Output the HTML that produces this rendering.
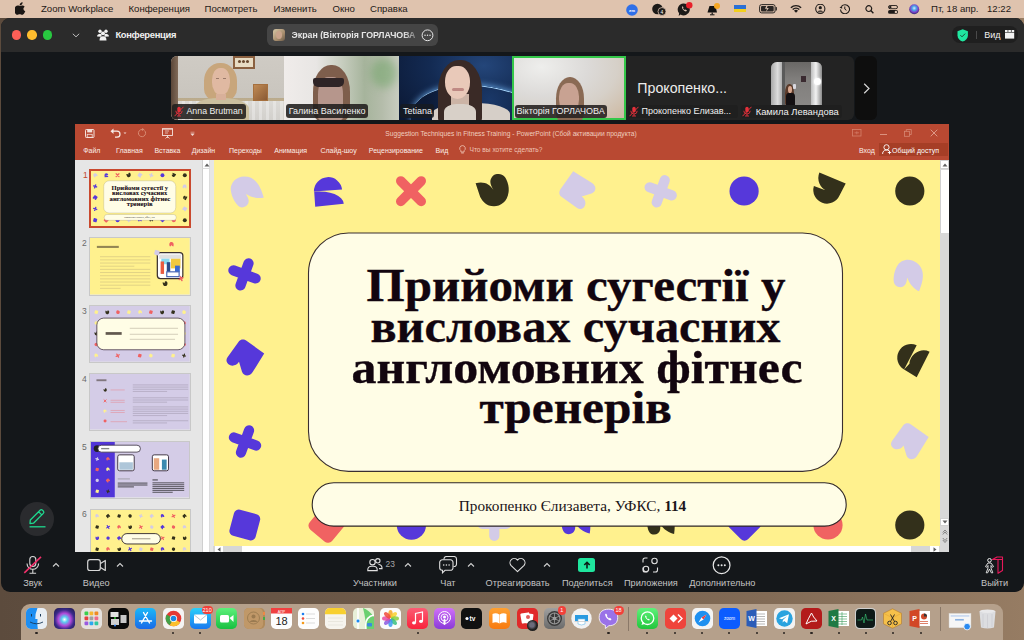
<!DOCTYPE html>
<html><head><meta charset="utf-8">
<style>
*{box-sizing:border-box;margin:0;padding:0}
html,body{width:1024px;height:640px;overflow:hidden;background:#8a7565;font-family:"Liberation Sans",sans-serif}
.a{position:absolute}
.t{position:absolute;white-space:nowrap;line-height:1}
#desk{left:0;top:0;width:1024px;height:640px;background:linear-gradient(90deg,#5c4b3d 0%,#6e5a49 40%,#826b56 75%,#967c63 100%)}
#menubar{left:0;top:0;width:1024px;height:17.5px;background:#dfc3ae}
.lbl{font-size:9px;color:#f0f0f0}
#menubar .t{font-size:9.6px;color:#1e1a18;top:4px}
#zw{left:1px;top:17.5px;width:1022.5px;height:574px;background:#14171a;border-radius:9px;overflow:hidden}
#zhead{left:0;top:0;width:100%;height:34.5px;background:#2b2b2b}
#ppt{left:75.3px;top:124.4px;width:873.5px;height:427.5px;background:#e6e6e6;overflow:hidden}
#ribbon{left:0;top:0;width:100%;height:35.5px;background:#b94932}
.tab{top:22.5px;font-size:7px;color:#fbeee8}
.num{font-size:8.5px;color:#6a6a6a}
#slide{left:139px;top:35.5px;width:726.5px;height:386.5px;background:#fff08e;overflow:hidden}
.tl{color:#c4c4c4;font-size:9.2px;top:579.2px}
#dock{left:21.1px;top:603.5px;width:981.6px;height:45px;background:#b5a08b;border-radius:9px}
</style></head>
<body>
<div id="desk" class="a"></div>
<div id="menubar" class="a">
  <div class="t" style="left:41px">Zoom Workplace</div>
  <div class="t" style="left:128.5px">Конференция</div>
  <div class="t" style="left:204.5px">Посмотреть</div>
  <div class="t" style="left:273.5px">Изменить</div>
  <div class="t" style="left:332.5px">Окно</div>
  <div class="t" style="left:370px">Справка</div>

  <svg class="a" style="left:15px;top:2px" width="11" height="13" viewBox="0 0 11 13"><path d="M7.6 0.3c0.1 0.9-0.3 1.8-0.8 2.3-0.6 0.6-1.4 1-2.2 0.9-0.1-0.9 0.3-1.7 0.8-2.3 0.6-0.6 1.5-1 2.2-0.9zM10.3 9.3c-0.3 0.7-0.5 1-0.9 1.6-0.6 0.9-1.4 1.9-2.4 1.9-0.9 0-1.1-0.6-2.3-0.6s-1.5 0.6-2.4 0.6c-1 0-1.7-0.9-2.3-1.8C-1.6 8.500-0.1 5.300 0.6 4.600 1.200 3.900 2 3.500 2.900 3.500c0.900 0 1.500 0.600 2.300 0.600 0.700 0 1.200-0.600 2.300-0.600 0.800 0 1.600 0.400 2.200 1.200-1.900 1.100-1.600 3.900 0.600 4.600z" fill="#1a1614"/></svg>
  <svg class="a" style="left:626px;top:3.5px" width="12" height="12"><circle cx="6" cy="6" r="5.8" fill="#2f6fe8"/><text x="6" y="7.6" font-size="4.2" font-family="Liberation Sans" font-weight="bold" fill="#fff" text-anchor="middle">zm</text></svg>
  <svg class="a" style="left:652px;top:3px" width="15" height="13"><circle cx="5.5" cy="6" r="5.3" fill="#1c1a18"/><circle cx="10" cy="8.5" r="4" fill="#1c1a18" stroke="#dcc3b1" stroke-width="0.8"/><text x="10" y="10.6" font-size="5" font-family="Liberation Sans" fill="#fff" text-anchor="middle">4</text></svg>
  <svg class="a" style="left:677px;top:1px" width="17" height="16"><path d="M6.5 2.5a6 6 0 1 1 -3 11l-1.8 1.5 0.4-2.7a6 6 0 0 1 4.4-9.8z" fill="#1c1a18"/><path d="M5 6.5c0.5 2 2 3.5 4 4l1-1-1.5-1-0.7 0.5c-0.8-0.4-1.4-1-1.8-1.8l0.5-0.7-1-1.5z" fill="#dcc3b1"/><circle cx="12.3" cy="4.3" r="3.2" fill="#e8202a"/></svg>
  <svg class="a" style="left:706px;top:2px" width="15" height="14"><path d="M1.5 10.5l2-6.5h6l1.5 6.5z" fill="#111"/><rect x="5.6" y="10.5" width="1.2" height="2" fill="#111"/><rect x="4" y="12.3" width="4.5" height="1" fill="#111"/><circle cx="11" cy="4" r="3" fill="#f5a623"/></svg>
  <div class="a" style="left:734px;top:4.7px;width:11.5px;height:3.9px;background:#2a6fd6"></div>
  <div class="a" style="left:734px;top:8.6px;width:11.5px;height:3.9px;background:#f2cf1e"></div>
  <svg class="a" style="left:759px;top:4px" width="19" height="10"><rect x="0.6" y="0.6" width="15.5" height="8.3" rx="2" fill="none" stroke="#2a2624" stroke-width="1"/><rect x="16.7" y="3" width="1.2" height="3.5" rx="0.5" fill="#2a2624"/><rect x="2" y="2" width="12.7" height="5.5" rx="1" fill="#2a2624"/><path d="M7.5 1.5l-1.5 3.2h2l-1 3.2 2.8-4h-2l1-2.4z" fill="#dcc3b1"/></svg>
  <svg class="a" style="left:790px;top:4px" width="12" height="9"><path d="M0.4 3.2a8 8 0 0 1 11.2 0l-1 1a6.5 6.5 0 0 0 -9.2 0z M2.2 5a5.4 5.4 0 0 1 7.6 0l-1 1a4 4 0 0 0 -5.6 0z M4 6.8a2.8 2.8 0 0 1 4 0l-2 2z" fill="#1f1b19"/></svg>
  <svg class="a" style="left:814.5px;top:4px" width="11" height="10"><circle cx="5.3" cy="4.8" r="4.6" fill="none" stroke="#1f1b19" stroke-width="1.1"/><circle cx="5.3" cy="3.7" r="1.6" fill="#1f1b19"/><path d="M2.4 7.7a3.4 2.6 0 0 1 5.8 0" fill="#1f1b19"/></svg>
  <svg class="a" style="left:839px;top:4px" width="11" height="10"><path d="M2.5 2.4a4.5 4.5 0 1 1 -1 3" fill="none" stroke="#1f1b19" stroke-width="1.1"/><path d="M0.5 3.5l2.5-1.5 0.2 2.8z" fill="#1f1b19"/><path d="M5.8 2.5v2.6l1.6 1.2" fill="none" stroke="#1f1b19" stroke-width="1"/></svg>
  <svg class="a" style="left:865px;top:4.5px" width="10" height="9"><circle cx="3.8" cy="3.6" r="2.9" fill="none" stroke="#1f1b19" stroke-width="1.2"/><path d="M5.8 5.6l2.6 2.6" stroke="#1f1b19" stroke-width="1.4"/></svg>
  <svg class="a" style="left:887.5px;top:4.5px" width="10" height="9"><rect x="0.5" y="0.5" width="9" height="3.2" rx="1.6" fill="none" stroke="#1f1b19" stroke-width="0.9"/><circle cx="2.3" cy="2.1" r="1.2" fill="#1f1b19"/><rect x="0" y="5" width="10" height="3.8" rx="1.9" fill="#1f1b19"/><circle cx="7.9" cy="6.9" r="1.2" fill="#dcc3b1"/></svg>
  <svg class="a" style="left:909px;top:3.5px" width="11" height="11"><defs><radialGradient id="sg" cx="50%" cy="40%" r="60%"><stop offset="0" stop-color="#e0e8ff"/><stop offset="0.35" stop-color="#4aa8e8"/><stop offset="0.7" stop-color="#7c3fc8"/><stop offset="1" stop-color="#2a2a6a"/></radialGradient></defs><circle cx="5.2" cy="5.2" r="5" fill="url(#sg)"/></svg>
  <div class="t" style="left:931px">Пт, 18 апр.</div>
  <div class="t" style="left:987px">12:22</div>
</div>
<div id="zw" class="a">

  <div id="zhead" class="a">
    <div class="a" style="left:10.9px;top:12.8px;width:9.4px;height:9.4px;border-radius:50%;background:#fe5f57"></div>
    <div class="a" style="left:26.4px;top:12.8px;width:9.4px;height:9.4px;border-radius:50%;background:#febc2e"></div>
    <div class="a" style="left:42.1px;top:12.8px;width:9.4px;height:9.4px;border-radius:50%;background:#28c840"></div>
    <svg class="a" style="left:71px;top:15.5px" width="8" height="5"><path d="M0.8 0.8l3.2 3 3.2-3" fill="none" stroke="#bdbdbd" stroke-width="1"/></svg>
    <svg class="a" style="left:95.5px;top:11.2px" width="12" height="12"><circle cx="3" cy="2.2" r="1.7" fill="#f2f2f2"/><circle cx="9" cy="2.2" r="1.7" fill="#f2f2f2"/><circle cx="6" cy="4.3" r="1.9" fill="#f2f2f2"/><path d="M0.2 7.5a2.8 2.2 0 0 1 4.5-2.2l-0.4 2.4z M11.8 7.5a2.8 2.2 0 0 0 -4.5-2.2l0.4 2.4z" fill="#f2f2f2"/><path d="M2.5 11.5a3.5 4.2 0 0 1 7 0z" fill="#f2f2f2"/></svg>
    <div class="t" style="left:114.4px;top:12.4px;font-size:9.4px;font-weight:bold;color:#f0f0f0;letter-spacing:-0.3px">Конференция</div>
    <div class="a" style="left:266.4px;top:6.1px;width:171px;height:22.2px;border-radius:6px;background:#454545"></div>
    <div class="a" style="left:271.6px;top:11.6px;width:12px;height:11.5px;border-radius:3px;background:linear-gradient(135deg,#d8c9a8,#a88e6e 60%,#6a5a48)"></div>
    <div class="a" style="left:274.5px;top:13px;width:6.5px;height:8px;border-radius:50%;background:#c9a48c"></div>
    <div class="t" style="left:290.5px;top:13.2px;font-size:8.8px;font-weight:bold;color:#e6e6e6;width:126px;overflow:hidden;-webkit-mask-image:linear-gradient(90deg,#000 88%,rgba(0,0,0,0.25))">Экран (Вікторія ГОРЛАЧОВА</div>
    <svg class="a" style="left:419.5px;top:11.3px" width="13" height="13"><circle cx="6.5" cy="6.3" r="5.4" fill="none" stroke="#e8e8e8" stroke-width="1"/><circle cx="4" cy="6.3" r="0.75" fill="#e8e8e8"/><circle cx="6.5" cy="6.3" r="0.75" fill="#e8e8e8"/><circle cx="9" cy="6.3" r="0.75" fill="#e8e8e8"/></svg>
    <div class="a" style="left:951.3px;top:8.7px;width:66px;height:16.4px;border-radius:8px;background:#1f1f1f"></div>
    <svg class="a" style="left:955.5px;top:11px" width="12" height="13"><path d="M5.7 0.3l5.2 2v4.2c0 3-2.3 5.1-5.2 6.1-2.9-1-5.2-3.1-5.2-6.1v-4.2z" fill="#1fe8a0"/><path d="M3.4 6.2l1.6 1.6 3.2-3.2" fill="none" stroke="#1a3a2c" stroke-width="0.9"/></svg>
    <div class="a" style="left:975.2px;top:13px;width:1px;height:8.5px;background:#4a4a4a"></div>
    <div class="t" style="left:983.3px;top:13.5px;font-size:9px;color:#f2f2f2">Вид</div>
    <svg class="a" style="left:1003.8px;top:12.8px" width="10" height="9"><rect x="0" y="2.6" width="9.2" height="6" fill="#f4f4f4"/><rect x="0" y="0" width="2.6" height="2" fill="#f4f4f4"/><rect x="3.3" y="0" width="2.6" height="2" fill="#f4f4f4"/><rect x="6.6" y="0" width="2.6" height="2" fill="#f4f4f4"/></svg>
  </div>
</div>
<div id="strip" class="a">
  <div class="a" style="left:171px;top:56.2px;width:682.5px;height:63.7px;border-radius:6px;background:#232323;overflow:hidden">
    <!-- tile1 -->
    <div class="a" style="left:0;top:0;width:113.4px;height:63.7px;background:linear-gradient(180deg,#cfcbc4 0%,#c9c5be 66%,#b9aa8c 66%,#c0ae8e 70%,#dcdad6 70%,#d2d0cc 100%)"></div>
    <div class="a" style="left:0;top:0;width:113.4px;height:63.7px;background:repeating-linear-gradient(90deg,rgba(255,255,255,0) 0 4px,rgba(255,255,255,.3) 4px 7px);-webkit-mask-image:linear-gradient(180deg,transparent 70%,#000 70%)"></div>
    <div class="a" style="left:0;top:0;width:6.5px;height:63.7px;background:linear-gradient(90deg,#5a4638,#806a58)"></div>
    <div class="a" style="left:62.2px;top:0;width:21.8px;height:12.4px;background:#e8dcc4;border:2px solid #8a6040"></div>
    <div class="a" style="left:67px;top:3.5px;width:3px;height:3px;border-radius:50%;background:#6a4a30;box-shadow:4px 0 #6a4a30,8px 0 #6a4a30"></div>
    <div class="a" style="left:81.8px;top:27.6px;width:14.8px;height:17.7px;background:linear-gradient(135deg,#c08a54,#8a5a34);border:1px solid #a6703e"></div>
    <div class="a" style="left:32.7px;top:7.3px;width:33.3px;height:37px;border-radius:48% 48% 30% 30%;background:#c8a67c"></div>
    <div class="a" style="left:22px;top:42px;width:56px;height:24px;border-radius:45% 45% 0 0;background:#cbbf9f"></div>
    <div class="a" style="left:41.2px;top:11.8px;width:17.6px;height:26.6px;border-radius:45% 45% 48% 48%;background:#e0b9a2"></div>
    <div class="a" style="left:45px;top:38px;width:10px;height:6px;background:#d8b09a"></div>
    <div class="a" style="left:44.5px;top:21.5px;width:3.5px;height:1.2px;background:#9a7a6a;box-shadow:7px 0 #9a7a6a"></div>
    <!-- tile2 -->
    <div class="a" style="left:113.4px;top:0;width:114.3px;height:63.7px;background:linear-gradient(90deg,#f0ecea 0%,#e8e6e4 28%,#c8cec0 50%,#a6b49c 70%,#b4bcaa 85%,#c8ccc0 100%)"></div>
    <div class="a" style="left:200px;top:2px;width:26px;height:30px;border-radius:50%;background:rgba(100,160,90,.45);filter:blur(4px)"></div>
    <div class="a" style="left:142px;top:8.5px;width:37px;height:56px;border-radius:48% 48% 20% 20%;background:#7e5e4c"></div>
    <div class="a" style="left:147px;top:20.8px;width:25px;height:43px;border-radius:40% 40% 10% 10%;background:#b6968c"></div>
    <div class="a" style="left:141.7px;top:22.3px;width:31.3px;height:8.1px;border-radius:2px 2px 5px 5px;background:#2e2426"></div>
    <!-- tile3 -->
    <div class="a" style="left:227.7px;top:0;width:113.4px;height:63.7px;overflow:hidden;background:radial-gradient(ellipse at 75% 15%,#24467a 0%,#132a52 45%,#0a1630 100%)">
      <div class="a" style="left:18px;top:31px;width:150px;height:80px;border-radius:50%;transform:rotate(10deg);transform-origin:50% 0;border-top:1.5px solid #a8d8ff;box-shadow:0 -1px 6px rgba(120,190,255,.75);background:radial-gradient(ellipse at 50% 15%,#1a3868,#0c1a36 60%)"></div>
      <div class="a" style="left:33px;top:46.8px;width:78px;height:24px;border-radius:45% 45% 0 0;background:#d6cfc8"></div>
      <div class="a" style="left:39px;top:4.1px;width:44px;height:64px;border-radius:48% 48% 10% 10%;background:#3a2a26"></div>
      <div class="a" style="left:52px;top:38px;width:18px;height:14px;background:#ccb4a6"></div>
      <div class="a" style="left:45.5px;top:48px;width:32px;height:20px;border-radius:40% 40% 0 0;background:#d8d0c8"></div>
      <div class="a" style="left:46.8px;top:9.8px;width:25px;height:33.5px;border-radius:45% 45% 50% 50%;background:#e9c9b9"></div>
      <div class="a" style="left:53px;top:31.5px;width:12px;height:3px;border-radius:2px;background:#c08a84"></div>
    </div>
    <!-- tile4 -->
    <div class="a" style="left:341.2px;top:0;width:113.8px;height:63.7px;border:2px solid #34c749;background:radial-gradient(ellipse at 25% 15%,#eeeeec 0%,#dcdad8 40%,#d6d0c8 65%,#cdb8a0 100%)"></div>
    <div class="a" style="left:384.7px;top:20.8px;width:28.6px;height:45px;border-radius:48% 48% 20% 20%;background:#8a6a54"></div>
    <div class="a" style="left:388px;top:26.8px;width:20px;height:30px;border-radius:45%;background:#c8a292"></div>
    <!-- tile6 inner video -->
    <div class="a" style="left:599.6px;top:6.1px;width:51.3px;height:42.4px;border-radius:6px 6px 0 0;overflow:hidden;background:linear-gradient(180deg,#6a6866,#807e7c 40%,#8a8886)">
      <div class="a" style="left:0;top:0;width:11px;height:43px;background:linear-gradient(90deg,#a8a8a8,#dcdcdc 60%,#b0b0b0)"></div>
      <div class="a" style="left:11px;top:0;width:3px;height:43px;background:#5a5a5a"></div>
      <div class="a" style="left:40px;top:0;width:11.3px;height:43px;background:linear-gradient(90deg,#bdbdbd,#f2f2f2 45%,#8a8a8a)"></div>
      <div class="a" style="left:43px;top:15.5px;width:7px;height:7px;border-radius:50%;background:#fff;box-shadow:0 0 3px #fff"></div>
      <div class="a" style="left:30px;top:14px;width:5px;height:6px;background:#3a2a30"></div>
      <div class="a" style="left:14.5px;top:22px;width:9px;height:21px;border-radius:45% 45% 10% 10%;background:#5a3a2a"></div>
      <div class="a" style="left:15px;top:31px;width:9px;height:12px;border-radius:30% 30% 0 0;background:#141012"></div>
      <div class="a" style="left:17px;top:24px;width:4.5px;height:7px;border-radius:45%;background:#d8a890"></div>
      <div class="a" style="left:22px;top:22px;width:3px;height:5px;border-radius:1px;background:#d8d8e0"></div>
    </div>
  </div>
  <div class="a" style="left:855.3px;top:56.4px;width:21.5px;height:63.3px;border-radius:6px;background:#0e0e0e"></div>
  <svg class="a" style="left:862.5px;top:82.5px" width="8" height="11"><path d="M1.2 0.8l4.8 4.7-4.8 4.7" fill="none" stroke="#d8d8d8" stroke-width="1.2"/></svg>
  <div class="t" style="left:637.3px;top:81.2px;font-size:14.2px;color:#ececec">Прокопенко...</div>
  <!-- labels -->
  <div class="a" style="left:172.2px;top:104.4px;width:73.8px;height:14.3px;border-radius:3px;background:rgba(32,30,28,.88)"></div>
  <div class="a" style="left:286.2px;top:104.4px;width:81.6px;height:14.1px;border-radius:3px;background:rgba(32,30,28,.88)"></div>
  <div class="a" style="left:400.2px;top:104.4px;width:33.9px;height:14.1px;border-radius:3px;background:rgba(22,26,34,.88)"></div>
  <div class="a" style="left:514.5px;top:105px;width:92.2px;height:13px;border-radius:3px;background:rgba(40,36,34,.9)"></div>
  <div class="a" style="left:627.7px;top:105px;width:110.3px;height:13.2px;border-radius:3px;background:#1f1f1f"></div>
  <div class="a" style="left:741.3px;top:104.7px;width:101.1px;height:13.3px;border-radius:3px;background:#1f1f1f"></div>
  <div class="t lbl" style="left:186.5px;top:106.8px;font-size:8.8px">Anna Brutman</div>
  <div class="t lbl" style="left:288.7px;top:106.8px">Галина Василенко</div>
  <div class="t lbl" style="left:403px;top:106.8px">Tetiana</div>
  <div class="t lbl" style="left:516.6px;top:106.8px">Вікторія ГОРЛАЧОВА</div>
  <div class="t lbl" style="left:641.5px;top:106.8px">Прокопенко Елизав...</div>
  <div class="t lbl" style="left:755.7px;top:106.8px;font-size:9.4px">Камила Левандова</div>
  <svg class="a mm" style="left:173.5px;top:106px" width="10" height="11"><rect x="3.3" y="0.8" width="3.4" height="5.6" rx="1.7" fill="#e5303a"/><path d="M1.8 4.8a3.2 3.2 0 0 0 6.4 0M5 8v2M3 10h4" fill="none" stroke="#e5303a" stroke-width="0.9"/><path d="M0.5 10.2l9-9.4" stroke="#e5303a" stroke-width="1"/></svg>
  <svg class="a mm" style="left:629px;top:106px" width="10" height="11"><rect x="3.3" y="0.8" width="3.4" height="5.6" rx="1.7" fill="#e5303a"/><path d="M1.8 4.8a3.2 3.2 0 0 0 6.4 0M5 8v2M3 10h4" fill="none" stroke="#e5303a" stroke-width="0.9"/><path d="M0.5 10.2l9-9.4" stroke="#e5303a" stroke-width="1"/></svg>
  <svg class="a mm" style="left:742px;top:106px" width="10" height="11"><rect x="3.3" y="0.8" width="3.4" height="5.6" rx="1.7" fill="#e5303a"/><path d="M1.8 4.8a3.2 3.2 0 0 0 6.4 0M5 8v2M3 10h4" fill="none" stroke="#e5303a" stroke-width="0.9"/><path d="M0.5 10.2l9-9.4" stroke="#e5303a" stroke-width="1"/></svg>
</div>
<div id="ppt" class="a">
  <div id="ribbon" class="a">
    <svg class="a" style="left:10px;top:4.5px" width="10" height="9"><rect x="0.5" y="0.5" width="8.5" height="8" rx="0.8" fill="none" stroke="#f4e2dc" stroke-width="1"/><rect x="2.2" y="0.8" width="5" height="2.6" fill="#f4e2dc"/><rect x="2.2" y="5.3" width="5" height="3" fill="none" stroke="#f4e2dc" stroke-width="0.8"/></svg>
    <svg class="a" style="left:34.5px;top:4px" width="18" height="10"><path d="M2 3.2h5a3 3 0 0 1 0 6h-2" fill="none" stroke="#f8ece8" stroke-width="1.2"/><path d="M0.5 3.2l3-2.7v5.4z" fill="#f8ece8"/><path d="M13.5 4.5h3l-1.5 1.6z" fill="#f0d8d0"/></svg>
    <svg class="a" style="left:62px;top:4px" width="10" height="10"><path d="M7.5 2.5a3.6 3.6 0 1 1 -2.5-1" fill="none" stroke="#d88a72" stroke-width="1"/><path d="M5 0l2.5 1.5-2.5 1.5z" fill="#d88a72"/></svg>
    <svg class="a" style="left:86.5px;top:4px" width="12" height="11"><rect x="0.5" y="1" width="10" height="6.5" fill="none" stroke="#f4e2dc" stroke-width="0.9"/><path d="M0 0.8h11" stroke="#f4e2dc"/><path d="M5.5 7.5v2.5M3.5 10.5l2-2 2 2" fill="none" stroke="#f4e2dc" stroke-width="0.8"/><path d="M3 3h4M3 5h3" stroke="#f4e2dc" stroke-width="0.7"/></svg>
    <svg class="a" style="left:115px;top:6.5px" width="5" height="6"><path d="M0.5 1.2h4M0.8 2.8l1.7 2 1.7-2z" fill="#f0d8d0" stroke="#f0d8d0" stroke-width="0.5"/></svg>
    <div class="t" style="left:310px;top:6.4px;font-size:6.7px;color:#f0cdbf">Suggestion Techniques in Fitness Training - PowerPoint (Сбой активации продукта)</div>
    <svg class="a" style="left:777px;top:4.5px;opacity:.6" width="10" height="8"><rect x="0.5" y="0.5" width="8.5" height="6.5" fill="none" stroke="#e9a590" stroke-width="0.8"/><path d="M2.5 3.8h4.5M4.8 2.3v3" stroke="#e9a590" stroke-width="0.7"/></svg>
    <div class="a" style="left:804.5px;top:10px;width:7px;height:0.9px;background:#eab2a0;opacity:.7"></div>
    <svg class="a" style="left:829px;top:5px;opacity:.6" width="8" height="8"><rect x="0.5" y="2.3" width="5" height="5" fill="none" stroke="#eab2a0" stroke-width="0.8"/><path d="M2.3 2.3v-1.8h5v5h-1.8" fill="none" stroke="#eab2a0" stroke-width="0.8"/></svg>
    <svg class="a" style="left:855px;top:5px;opacity:.75" width="8" height="8"><path d="M0.7 0.7l6.6 6.6M7.3 0.7l-6.6 6.6" stroke="#f0c0b0" stroke-width="0.9"/></svg>
    <div class="t tab" style="left:7.9px">Файл</div>
    <div class="t tab" style="left:40.8px">Главная</div>
    <div class="t tab" style="left:79.1px">Вставка</div>
    <div class="t tab" style="left:116.4px">Дизайн</div>
    <div class="t tab" style="left:153.7px">Переходы</div>
    <div class="t tab" style="left:199px">Анимация</div>
    <div class="t tab" style="left:245.1px">Слайд-шоу</div>
    <div class="t tab" style="left:293.5px">Рецензирование</div>
    <div class="t tab" style="left:360.3px">Вид</div>
    <svg class="a" style="left:383.5px;top:21px" width="7" height="9"><path d="M3.5 0.6a2.8 2.8 0 0 1 1.6 5.1v1.3h-3.2v-1.3a2.8 2.8 0 0 1 1.6-5.1z" fill="none" stroke="#f0c8b8" stroke-width="0.8"/><path d="M2.2 8h2.6" stroke="#f0c8b8" stroke-width="0.8"/></svg>
    <div class="t tab" style="left:394.2px;font-size:6.6px;color:#f0c4b4">Что вы хотите сделать?</div>
    <div class="t tab" style="left:783.7px">Вход</div>
    <div class="a" style="left:803.7px;top:18.6px;width:69.3px;height:13px;background:#a63e26"></div>
    <svg class="a" style="left:806.5px;top:19.5px" width="10" height="11"><circle cx="4.5" cy="3.3" r="2.6" fill="none" stroke="#fff" stroke-width="0.9"/><path d="M0.6 10a4 3.6 0 0 1 6.6-3.2M7.5 6.8v3.4M5.8 8.5h3.4" fill="none" stroke="#fff" stroke-width="0.9"/></svg>
    <div class="t tab" style="left:816.7px;color:#fff">Общий доступ</div>
  </div>
  <div class="a" style="left:0;top:35.5px;width:138px;height:392px;background:#e6e6e6"></div>
  <div class="a" style="left:127.2px;top:36px;width:8px;height:392px;background:#fff;border-left:1px solid #cfcfcf;border-right:1px solid #dcdcdc"></div>
  <div class="a" style="left:127.2px;top:36px;width:8px;height:9px;border-left:1px solid #cfcfcf;border-right:1px solid #dcdcdc;border-bottom:1px solid #dcdcdc;background:#fff"></div>
  <svg class="a" style="left:128.5px;top:39px" width="6" height="4"><path d="M0.5 3.5l2.5-3 2.5 3z" fill="#606060"/></svg>
  <div class="t num" style="left:7.7px;top:46.6px;color:#c0452c">1</div>
  <div class="t num" style="left:6.8px;top:114.6px">2</div>
  <div class="t num" style="left:6.8px;top:182.6px">3</div>
  <div class="t num" style="left:6.8px;top:250.6px">4</div>
  <div class="t num" style="left:6.8px;top:318.6px">5</div>
  <div class="t num" style="left:6.8px;top:385.3px">6</div>
  <div id="thumbs"><div class="a" style="left:13.8px;top:45.1px;width:102px;height:58.8px;border:2px solid #c9492e;overflow:hidden"><svg class="a" style="left:0;top:0" width="98" height="55.1" viewBox="0 0 727 409" preserveAspectRatio="none"><use href="#s1"/></svg></div>
<div class="a" style="left:14.2px;top:113.1px;width:101.7px;height:58.5px;border:1px solid #c8c8c8;overflow:hidden"><svg class="a" style="left:0;top:0" width="99.7" height="56.5" viewBox="0 0 727 409" preserveAspectRatio="none"><rect width="727" height="409" fill="#fff18e"/><rect x="50" y="57" width="160" height="15" fill="#4a3e2c" opacity="0.6"/><rect x="73" y="132.0" width="367" height="7" fill="#9a8c70" opacity="0.3"/><rect x="73" y="154.9" width="367" height="7" fill="#9a8c70" opacity="0.3"/><rect x="73" y="177.8" width="367" height="7" fill="#9a8c70" opacity="0.3"/><rect x="73" y="200.7" width="250" height="7" fill="#9a8c70" opacity="0.3"/><rect x="73" y="223.6" width="367" height="7" fill="#9a8c70" opacity="0.3"/><rect x="73" y="246.5" width="367" height="7" fill="#9a8c70" opacity="0.3"/><rect x="73" y="269.4" width="367" height="7" fill="#9a8c70" opacity="0.3"/><rect x="73" y="292.3" width="367" height="7" fill="#9a8c70" opacity="0.3"/><rect x="73" y="315.2" width="367" height="7" fill="#9a8c70" opacity="0.3"/><rect x="73" y="338.1" width="367" height="7" fill="#9a8c70" opacity="0.3"/><rect x="73" y="361.0" width="150" height="7" fill="#9a8c70" opacity="0.3"/><rect x="491" y="106" width="186" height="188" rx="22" fill="#fff" stroke="#3a3030" stroke-width="9"/><rect x="505" y="120" width="158" height="30" fill="#e0e0e0"/><rect x="590" y="150" width="70" height="70" fill="#f0c840"/><rect x="520" y="150" width="60" height="40" fill="#88d8f0"/><rect x="515" y="170" width="25" height="90" fill="#e85a40"/><rect x="560" y="175" width="25" height="70" fill="#2a4a8a"/><rect x="620" y="200" width="35" height="45" fill="#3a6ad0"/><rect x="560" y="245" width="90" height="35" fill="#fff" stroke="#3a5ab0" stroke-width="8"/><use href="#pac" transform="translate(595 48) rotate(30) scale(1.1)" fill="#f06262"/><use href="#rsq" transform="translate(488 106) rotate(15) scale(1.3)" fill="#d3cbe7"/><use href="#xx" transform="translate(664 294) rotate(20) scale(1.1)" style="color:#f06262;fill:none"/><use href="#tul" transform="translate(547 330) rotate(0) scale(1.1)" fill="#33301b"/></svg></div>
<div class="a" style="left:14.2px;top:181.1px;width:101.7px;height:57.6px;border:1px solid #c8c8c8;overflow:hidden"><svg class="a" style="left:0;top:0" width="99.7" height="55.6" viewBox="0 0 727 409" preserveAspectRatio="none"><rect width="727" height="409" fill="#d4cce7"/><use href="#rsq" transform="translate(46 45.5) rotate(15) scale(0.9)" fill="#fff18e"/><use href="#tul" transform="translate(125 45.5) rotate(15) scale(0.9)" fill="#33301b"/><use href="#circ" transform="translate(204 45.5) rotate(15) scale(0.9)" fill="#f06262"/><use href="#rsq" transform="translate(284 45.5) rotate(15) scale(0.9)" fill="#fff18e"/><use href="#pac" transform="translate(366 45.5) rotate(15) scale(0.9)" fill="#fff18e"/><use href="#rsq" transform="translate(444 45.5) rotate(15) scale(0.9)" fill="#f06262"/><use href="#tul" transform="translate(525 45.5) rotate(15) scale(0.9)" fill="#33301b"/><use href="#rsq" transform="translate(606 45.5) rotate(15) scale(0.9)" fill="#33301b"/><use href="#circ" transform="translate(686 45.5) rotate(15) scale(0.9)" fill="#fff18e"/><use href="#pac" transform="translate(46 365) rotate(15) scale(0.9)" fill="#fff18e"/><use href="#xx" transform="translate(202 365) rotate(15) scale(0.9)" style="color:#f06262;fill:none"/><use href="#rsq" transform="translate(363 365) rotate(15) scale(0.9)" fill="#f06262"/><use href="#circ" transform="translate(444 365) rotate(15) scale(0.9)" fill="#fff18e"/><use href="#rsq" transform="translate(606 365) rotate(15) scale(0.9)" fill="#fff18e"/><use href="#plus" transform="translate(686 365) rotate(15) scale(0.9)" style="color:#33301b;fill:none"/><use href="#circ" transform="translate(46 125) rotate(0) scale(0.9)" fill="#fff18e"/><use href="#tul" transform="translate(46 202) rotate(0) scale(0.9)" fill="#33301b"/><use href="#circ" transform="translate(46 283) rotate(0) scale(0.9)" fill="#f06262"/><use href="#circ" transform="translate(686 125) rotate(0) scale(0.9)" fill="#f06262"/><use href="#circ" transform="translate(686 202) rotate(0) scale(0.9)" fill="#fff18e"/><use href="#circ" transform="translate(686 283) rotate(0) scale(0.9)" fill="#f06262"/><rect x="50" y="89" width="642" height="233" rx="50" fill="#fffde6" stroke="#4a3a4a" stroke-width="6"/><rect x="114" y="192" width="117" height="20" fill="#3a2e28" opacity="0.8"/><rect x="290" y="160" width="352" height="9" fill="#8a8070" opacity="0.3"/><rect x="290" y="204" width="352" height="9" fill="#8a8070" opacity="0.3"/><rect x="290" y="241" width="330" height="9" fill="#8a8070" opacity="0.3"/></svg></div>
<div class="a" style="left:14.2px;top:249.1px;width:101.7px;height:57.5px;border:1px solid #c8c8c8;overflow:hidden"><svg class="a" style="left:0;top:0" width="99.7" height="55.5" viewBox="0 0 727 409" preserveAspectRatio="none"><rect width="727" height="409" fill="#d4cce7"/><rect x="47" y="39" width="73" height="14" fill="#4a3e3a" opacity="0.6"/><use href="#tul" transform="translate(110 118) rotate(0) scale(0.75)" fill="#33301b"/><use href="#xx" transform="translate(110 198) rotate(0) scale(0.75)" style="color:#f06262;fill:none"/><use href="#pac" transform="translate(110 274) rotate(0) scale(0.75)" fill="#fff18e"/><use href="#circ" transform="translate(110 346) rotate(0) scale(0.75)" fill="#f06262"/><rect x="150" y="114" width="103" height="7" fill="#f06262" opacity="0.35"/><rect x="150" y="190" width="103" height="7" fill="#f06262" opacity="0.35"/><rect x="150" y="205" width="103" height="7" fill="#f06262" opacity="0.35"/><rect x="150" y="265" width="103" height="7" fill="#f06262" opacity="0.35"/><rect x="150" y="280" width="103" height="7" fill="#f06262" opacity="0.35"/><rect x="150" y="348" width="120" height="7" fill="#f06262" opacity="0.35"/><rect x="312" y="77" width="404" height="7" fill="#6a6070" opacity="0.28"/><rect x="312" y="93" width="404" height="7" fill="#6a6070" opacity="0.28"/><rect x="312" y="109" width="404" height="7" fill="#6a6070" opacity="0.28"/><rect x="312" y="125" width="250" height="7" fill="#6a6070" opacity="0.28"/><rect x="312" y="172" width="404" height="7" fill="#6a6070" opacity="0.28"/><rect x="312" y="188" width="404" height="7" fill="#6a6070" opacity="0.28"/><rect x="312" y="204" width="250" height="7" fill="#6a6070" opacity="0.28"/><rect x="312" y="239" width="404" height="7" fill="#6a6070" opacity="0.28"/><rect x="312" y="255" width="404" height="7" fill="#6a6070" opacity="0.28"/><rect x="312" y="271" width="404" height="7" fill="#6a6070" opacity="0.28"/><rect x="312" y="287" width="404" height="7" fill="#6a6070" opacity="0.28"/><rect x="312" y="303" width="250" height="7" fill="#6a6070" opacity="0.28"/><rect x="312" y="341" width="404" height="7" fill="#6a6070" opacity="0.28"/><rect x="312" y="357" width="250" height="7" fill="#6a6070" opacity="0.28"/></svg></div>
<div class="a" style="left:14.5px;top:316.9px;width:100.2px;height:57.3px;border:1px solid #c8c8c8;overflow:hidden"><svg class="a" style="left:0;top:0" width="98.2" height="55.3" viewBox="0 0 727 409" preserveAspectRatio="none"><rect width="727" height="409" fill="#d4cce7"/><rect width="176" height="409" fill="#5135d8"/><use href="#plus" transform="translate(46 126) rotate(15) scale(0.85)" style="color:#d3cbe7;fill:none"/><use href="#pac" transform="translate(126 126) rotate(15) scale(0.85)" fill="#f06262"/><use href="#rsq" transform="translate(46 203) rotate(15) scale(0.85)" fill="#f06262"/><use href="#pac" transform="translate(126 203) rotate(15) scale(0.85)" fill="#fff18e"/><use href="#circ" transform="translate(46 284) rotate(15) scale(0.85)" fill="#d3cbe7"/><use href="#bm" transform="translate(126 284) rotate(15) scale(0.85)" fill="#f06262"/><use href="#rsq" transform="translate(46 365) rotate(15) scale(0.85)" fill="#fff18e"/><use href="#plus" transform="translate(126 365) rotate(15) scale(0.85)" style="color:#33301b;fill:none"/><circle cx="45" cy="49" r="25" fill="#222"/><rect x="51" y="23.5" width="315" height="51.5" rx="25.7" fill="#fff" stroke="#3a3040" stroke-width="6"/><rect x="75" y="44" width="60" height="10" fill="#333" opacity="0.6"/><rect x="198" y="95" width="122" height="118" rx="14" fill="#fff" stroke="#3a3040" stroke-width="7"/><rect x="210" y="150" width="100" height="55" fill="#9ab8d0" opacity="0.8"/><rect x="454" y="95" width="120" height="118" rx="14" fill="#fff" stroke="#3a3040" stroke-width="7"/><rect x="465" y="120" width="40" height="85" fill="#e8a880"/><rect x="525" y="130" width="35" height="75" fill="#3a8ab0"/><rect x="198" y="269" width="90" height="8" fill="#888" opacity="0.6"/><rect x="198" y="300" width="220" height="8" fill="#222" opacity="0.7"/><rect x="198" y="314" width="220" height="8" fill="#222" opacity="0.7"/><rect x="198" y="328" width="120" height="8" fill="#222" opacity="0.7"/><rect x="455" y="276" width="40" height="9" fill="#222" opacity="0.7"/><rect x="455" y="298" width="235" height="8" fill="#222" opacity="0.65"/><rect x="455" y="312" width="235" height="8" fill="#222" opacity="0.65"/><rect x="455" y="326" width="235" height="8" fill="#222" opacity="0.65"/><rect x="455" y="340" width="235" height="8" fill="#222" opacity="0.65"/><rect x="455" y="354" width="235" height="8" fill="#222" opacity="0.65"/><rect x="455" y="368" width="150" height="8" fill="#222" opacity="0.65"/></svg></div>
<div class="a" style="left:14.3px;top:384.3px;width:101.3px;height:45px;border:1px solid #c8c8c8;overflow:hidden"><svg class="a" style="left:0;top:0" width="99.3" height="55.8" viewBox="0 0 727 409" preserveAspectRatio="none"><rect width="727" height="409" fill="#fff18e"/><use href="#pac" transform="translate(45 44) rotate(15) scale(0.85)" fill="#d3cbe7"/><use href="#bm" transform="translate(125 44) rotate(15) scale(0.85)" fill="#33301b"/><use href="#rsq" transform="translate(206 44) rotate(15) scale(0.85)" fill="#33301b"/><use href="#circ" transform="translate(286 44) rotate(15) scale(0.85)" fill="#33301b"/><use href="#plus" transform="translate(365 44) rotate(15) scale(0.85)" style="color:#d3cbe7;fill:none"/><use href="#bm" transform="translate(445 44) rotate(15) scale(0.85)" fill="#d3cbe7"/><use href="#pac" transform="translate(524 44) rotate(15) scale(0.85)" fill="#5638da"/><use href="#xx" transform="translate(604 44) rotate(15) scale(0.85)" style="color:#f06262;fill:none"/><use href="#bm" transform="translate(685 44) rotate(15) scale(0.85)" fill="#33301b"/><use href="#rsq" transform="translate(45 125) rotate(15) scale(0.85)" fill="#33301b"/><use href="#xx" transform="translate(125 125) rotate(15) scale(0.85)" style="color:#5638da;fill:none"/><use href="#pac" transform="translate(206 125) rotate(15) scale(0.85)" fill="#f06262"/><use href="#tul" transform="translate(286 125) rotate(15) scale(0.85)" fill="#33301b"/><use href="#xx" transform="translate(365 125) rotate(15) scale(0.85)" style="color:#f06262;fill:none"/><use href="#circ" transform="translate(445 125) rotate(15) scale(0.85)" fill="#d3cbe7"/><use href="#bm" transform="translate(524 125) rotate(15) scale(0.85)" fill="#5638da"/><use href="#circ" transform="translate(604 125) rotate(15) scale(0.85)" fill="#f06262"/><use href="#pac" transform="translate(685 125) rotate(15) scale(0.85)" fill="#d3cbe7"/><use href="#tul" transform="translate(45 206) rotate(15) scale(0.85)" fill="#5638da"/><use href="#circ" transform="translate(125 206) rotate(15) scale(0.85)" fill="#5638da"/><use href="#bm" transform="translate(206 206) rotate(15) scale(0.85)" fill="#5638da"/><use href="#xx" transform="translate(524 206) rotate(15) scale(0.85)" style="color:#f06262;fill:none"/><use href="#rsq" transform="translate(604 206) rotate(15) scale(0.85)" fill="#33301b"/><use href="#tul" transform="translate(685 206) rotate(15) scale(0.85)" fill="#33301b"/><use href="#rsq" transform="translate(45 287) rotate(15) scale(0.85)" fill="#33301b"/><use href="#pac" transform="translate(125 287) rotate(15) scale(0.85)" fill="#f06262"/><use href="#tul" transform="translate(206 287) rotate(15) scale(0.85)" fill="#33301b"/><use href="#xx" transform="translate(286 287) rotate(15) scale(0.85)" style="color:#5638da;fill:none"/><use href="#rsq" transform="translate(365 287) rotate(15) scale(0.85)" fill="#d3cbe7"/><use href="#rsq" transform="translate(445 287) rotate(15) scale(0.85)" fill="#f06262"/><use href="#pac" transform="translate(524 287) rotate(15) scale(0.85)" fill="#5638da"/><use href="#circ" transform="translate(604 287) rotate(15) scale(0.85)" fill="#33301b"/><use href="#pac" transform="translate(685 287) rotate(15) scale(0.85)" fill="#d3cbe7"/><rect x="225" y="173" width="283" height="76" rx="38" fill="#fffde6" stroke="#3a3030" stroke-width="7"/><rect x="300" y="206" width="135" height="9" fill="#6a6050" opacity="0.5"/></svg></div></div>
  <svg id="slidesvg" class="a" style="left:139px;top:35.5px" width="726.5" height="386.5" viewBox="0 0 726.5 386.5">
<defs>
<path id="circ" d="M-14.6 0a14.6 14.6 0 1 0 29.2 0a14.6 14.6 0 1 0 -29.2 0z"/>
<path id="pac" d="M16.8 5.1C14 -4 10 -15.9 -2.75 -15.9C-12 -15.9 -17 -8 -16.2 -2.2C-15.5 5 -10 14.9 -5.2 14.9C-0.5 14.9 2.5 11 1.5 7C0.8 4 -0.9 2.5 -0.9 1.5C4 5 12 6.5 16.8 5.1Z"/>
<path id="dd" d="M-14.8 -0.6L13.4 -2.4A14.15 14.15 0 0 0 -14.8 -0.6ZM-14.5 -0.3A28.7 15.1 -6 0 1 15.1 11.8L-13.5 14.8Z"/>
<path id="dd2" d="M-10.1 -16.4L16.2 -5.6A14.2 14.2 0 0 1 -10.1 -16.4ZM-15.6 -3L10 6.6A13.7 13.7 0 0 1 -15.6 -3ZM16.2 -5.6L10 6.6L-2.3 2.3Z"/>
<path id="dd3" d="M4 -15L-8.6 9.3A13.7 13.7 0 0 1 4 -15ZM16.9 -8.6L4 16.9A14.3 14.3 0 0 1 16.9 -8.6ZM-8.6 9.3L0 0L4 16.9Z"/>
<g id="xx"><path d="M-10.2 -10.2L10.2 10.2M10.2 -10.2L-10.2 10.2" stroke-width="9.6" stroke-linecap="round" stroke="currentColor"/></g>
<path id="tul" d="M-16.8 -6.9C-8 -9 -3 -6 1 -0.3C-2 -5 -3 -9 -1 -12C1 -16 4 -16.2 6.3 -16.2C11 -16.2 14 -12 15 -8C16.5 -4 16.5 0 16.2 2C15 12 8 16.2 1.6 16.2C-6 16.2 -10 11 -12.2 6.9Z"/>
<path id="bm" d="M-4.4 -18.7L14.5 -7C19 -4 19 1.5 14 3.5L4 6.5C8 9 9 14 6.5 17C4.5 19.5 1.5 19.5 -0.5 18L-16.5 6.5C-19 4.5 -18.5 1 -17 -1Z"/>
<g id="plus"><path d="M0 -11.8V11.8M-11.8 0H11.8" stroke-width="10.2" stroke-linecap="round" stroke="currentColor"/></g>
<rect id="rsq" x="-13.5" y="-13.5" width="27" height="27" rx="5"/>
</defs>
<g id="s1">
<rect x="0" y="0" width="727" height="409" fill="#fff18e"/>
<use href="#pac" transform="translate(33 32.5) rotate(0) scale(1)" fill="#d3cbe7"/>
<use href="#dd" transform="translate(114.7 32) rotate(0) scale(1)" fill="#5638da"/>
<use href="#xx" transform="translate(197 31.2) rotate(0) scale(1)" style="color:#f06262;fill:none"/>
<use href="#tul" transform="translate(278.4 30.1) rotate(0) scale(1)" fill="#33301b"/>
<use href="#bm" transform="translate(363.6 30) rotate(0) scale(1)" fill="#d3cbe7"/>
<use href="#plus" transform="translate(446.7 31.3) rotate(20) scale(1)" style="color:#d3cbe7;fill:none"/>
<use href="#circ" transform="translate(530.1 31) rotate(0) scale(1)" fill="#5638da"/>
<use href="#dd2" transform="translate(615.5 29) rotate(0) scale(1)" fill="#33301b"/>
<use href="#circ" transform="translate(695.8 31) rotate(0) scale(1)" fill="#33301b"/>
<use href="#pac" transform="translate(695 117) rotate(38) scale(1)" fill="#d3cbe7"/>
<use href="#dd3" transform="translate(698.7 200.3) rotate(0) scale(1)" fill="#33301b"/>
<use href="#bm" transform="translate(696 281.5) rotate(90) scale(1)" fill="#d3cbe7"/>
<use href="#circ" transform="translate(695.8 365) rotate(0) scale(1)" fill="#33301b"/>
<use href="#plus" transform="translate(30.5 114.4) rotate(20) scale(1)" style="color:#5638da;fill:none"/>
<use href="#bm" transform="translate(31.5 197.8) rotate(90) scale(1)" fill="#5638da"/>
<use href="#plus" transform="translate(31 281.5) rotate(20) scale(1)" style="color:#5638da;fill:none"/>
<use href="#rsq" transform="translate(30.8 365) rotate(15) scale(1)" fill="#5638da"/>
<use href="#rsq" transform="translate(112.8 364.5) rotate(40) scale(1.08)" fill="#f06262"/>
<use href="#circ" transform="translate(197.4 365.20000000000005) rotate(0) scale(1)" fill="#5638da"/>
<use href="#plus" transform="translate(280.3 364) rotate(0) scale(1)" style="color:#d3cbe7;fill:none"/>
<use href="#pac" transform="translate(362.5 362) rotate(24) scale(1)" fill="#5638da"/>
<use href="#pac" transform="translate(447.5 363) rotate(24) scale(0.95)" fill="#33301b"/>
<use href="#rsq" transform="translate(530.5 364) rotate(45) scale(0.98)" fill="#5638da"/>
<use href="#circ" transform="translate(614 365) rotate(0) scale(1)" fill="#f06262"/>

<rect x="94.5" y="73" width="534" height="238.4" rx="40" fill="#fffde6" stroke="#3a2f30" stroke-width="1.1"/>
<rect x="98.2" y="322.8" width="534" height="43.3" rx="21.6" fill="#fffde6" stroke="#2e2628" stroke-width="1.1"/>
<g font-family="Liberation Serif" font-weight="bold" fill="#12050f" font-size="46.5" stroke="#12050f" stroke-width="0.35">
<text x="152.5" y="140.6" textLength="419" lengthAdjust="spacingAndGlyphs">Прийоми сугестії у</text>
<text x="156.5" y="181.9" textLength="410" lengthAdjust="spacingAndGlyphs">висловах сучасних</text>
<text x="137.6" y="222.6" textLength="451" lengthAdjust="spacingAndGlyphs">англомовних фітнес</text>
<text x="265.5" y="263.2" textLength="192.3" lengthAdjust="spacingAndGlyphs">тренерів</text>
</g>
<text x="358.5" y="350.5" font-family="Liberation Serif" font-size="15.3" fill="#1a1418" text-anchor="middle">Прокопенко Єлизавета, УФКС, <tspan font-weight="bold">114</tspan></text>
</g>
</svg>
  <div class="a" style="left:864.5px;top:35.5px;width:9.3px;height:392px;background:#d8d8d8"></div>
  <div class="a" style="left:864.5px;top:36px;width:9px;height:9px;background:#fff;border:1px solid #d0d0d0"></div>
  <svg class="a" style="left:866.5px;top:38.5px" width="6" height="4"><path d="M0.5 3.5l2.5-3 2.5 3z" fill="#606060"/></svg>
  <div class="a" style="left:864.7px;top:45.5px;width:8.6px;height:63px;background:#fff;border-left:1px solid #d0d0d0"></div>
  <div class="a" style="left:864.5px;top:393.8px;width:9px;height:7.5px;background:#fff;border:1px solid #d0d0d0"></div>
  <svg class="a" style="left:866.5px;top:396px" width="6" height="4"><path d="M0.5 0.5l2.5 3 2.5-3z" fill="#606060"/></svg>
  <svg class="a" style="left:866.5px;top:404.5px" width="6" height="14"><path d="M0.8 3.5l2.2-2.5 2.2 2.5M0.8 5.5l2.2-2.5 2.2 2.5M0.8 9l2.2 2.5 2.2-2.5M0.8 11l2.2 2.5 2.2-2.5" fill="none" stroke="#606060" stroke-width="0.7"/></svg>
  <div class="a" style="left:138px;top:421.8px;width:726.5px;height:6px;background:#d6d6d6"></div>
  <div class="a" style="left:139.3px;top:421.8px;width:8.4px;height:6px;background:#fff"></div>
  <svg class="a" style="left:141.5px;top:422.8px" width="4" height="5"><path d="M3.5 0.3l-3 2.2 3 2.2z" fill="#606060"/></svg>
  <div class="a" style="left:167.2px;top:421.8px;width:668.8px;height:6px;background:#fff"></div>
  <div class="a" style="left:854.7px;top:421.8px;width:9.4px;height:6px;background:#fff"></div>
  <svg class="a" style="left:858px;top:422.8px" width="4" height="5"><path d="M0.5 0.3l3 2.2-3 2.2z" fill="#606060"/></svg>
</div>
<div id="toolbar">
  <div class="a" style="left:19.8px;top:501.8px;width:34.4px;height:34.2px;border-radius:50%;background:#2a2b2e"></div>
  <svg class="a" style="left:27px;top:508px" width="20" height="21"><path d="M3 15.5l0.3-3.5 9.8-9.8a1.7 1.7 0 0 1 2.4 0l0.8 0.8a1.7 1.7 0 0 1 0 2.4l-9.8 9.8z M11.6 3.7l3.2 3.2" fill="none" stroke="#1ed88e" stroke-width="1.3" stroke-linejoin="round"/><path d="M2.5 18.8h16" stroke="#1ed88e" stroke-width="1.3"/></svg>
  <svg class="a" style="left:23px;top:554.5px" width="20" height="20"><rect x="6.8" y="1.5" width="6" height="10" rx="3" fill="none" stroke="#d8d8d8" stroke-width="1.1"/><path d="M4 8.5a5.8 5.8 0 0 0 11.6 0M9.8 14.3v3.8M6.5 18.3h6.6" fill="none" stroke="#d8d8d8" stroke-width="1.1"/><path d="M1.3 17.8L18 1.8" stroke="#f0306a" stroke-width="1.6"/></svg>
  <svg class="a st" style="left:52px;top:561.5px" width="8" height="6"><path d="M1 4.5l3-3 3 3" fill="none" stroke="#d0d0d0" stroke-width="1.1"/></svg>
  <svg class="a" style="left:86.5px;top:558.5px" width="20" height="13"><rect x="0.7" y="0.7" width="12.6" height="10.8" rx="2.3" fill="none" stroke="#d8d8d8" stroke-width="1.2"/><path d="M13.5 4.5l4.8-3v10l-4.8-3" fill="none" stroke="#d8d8d8" stroke-width="1.2" stroke-linejoin="round"/></svg>
  <svg class="a" style="left:115.5px;top:561.5px" width="8" height="6"><path d="M1 4.5l3-3 3 3" fill="none" stroke="#d0d0d0" stroke-width="1.1"/></svg>
  <svg class="a" style="left:367px;top:558px" width="16" height="14"><circle cx="5.5" cy="4.2" r="2.7" fill="none" stroke="#e0e0e0" stroke-width="1.1"/><path d="M0.8 12.6v-0.8a3.6 3.6 0 0 1 3.6-3.6h2.2a3.6 3.6 0 0 1 3.6 3.6v0.8z" fill="none" stroke="#e0e0e0" stroke-width="1.1"/><circle cx="10.8" cy="2.8" r="2.2" fill="none" stroke="#e0e0e0" stroke-width="1.1"/><path d="M11.5 6.5a3.3 3.3 0 0 1 3.5 3.3v0.8h-3" fill="none" stroke="#e0e0e0" stroke-width="1.1"/></svg>
  <div class="t" style="left:385.5px;top:560.3px;font-size:8.4px;color:#a8a8a8">23</div>
  <svg class="a" style="left:403.5px;top:561.5px" width="8" height="6"><path d="M1 4.5l3-3 3 3" fill="none" stroke="#d0d0d0" stroke-width="1.1"/></svg>
  <svg class="a" style="left:438.5px;top:556px" width="19" height="18"><path d="M5 3.5v-0.5a2.5 2.5 0 0 1 2.5-2.5h7.5a2.5 2.5 0 0 1 2.5 2.5v5a2.5 2.5 0 0 1 -2.5 2.5h-0.5" fill="none" stroke="#e0e0e0" stroke-width="1.1"/><path d="M3.2 3.8h8.3a2.5 2.5 0 0 1 2.5 2.5v5.5a2.5 2.5 0 0 1 -2.5 2.5h-5.5l-2.5 2.5v-2.5h-0.3a2.5 2.5 0 0 1 -2.5-2.5v-5.5a2.5 2.5 0 0 1 2.5-2.5z" fill="#15181c" stroke="#e0e0e0" stroke-width="1.1"/><circle cx="4.7" cy="9" r="0.8" fill="#e0e0e0"/><circle cx="7.4" cy="9" r="0.8" fill="#e0e0e0"/><circle cx="10.1" cy="9" r="0.8" fill="#e0e0e0"/></svg>
  <svg class="a" style="left:467px;top:561.5px" width="8" height="6"><path d="M1 4.5l3-3 3 3" fill="none" stroke="#d0d0d0" stroke-width="1.1"/></svg>
  <svg class="a" style="left:508px;top:557px" width="19" height="16"><path d="M9.5 14.6l-6.6-6.3a4.2 4.2 0 0 1 6.6-5.2 4.2 4.2 0 0 1 6.6 5.2z" fill="none" stroke="#e0e0e0" stroke-width="1.1" stroke-linejoin="round"/></svg>
  <svg class="a" style="left:543px;top:561.5px" width="8" height="6"><path d="M1 4.5l3-3 3 3" fill="none" stroke="#d0d0d0" stroke-width="1.1"/></svg>
  <div class="a" style="left:578.2px;top:557.5px;width:17.2px;height:14.4px;border-radius:2.5px;background:#1fe69e"></div>
  <svg class="a" style="left:582px;top:559.5px" width="10" height="10"><path d="M5 8.5v-6M2.3 5l2.7-2.7 2.7 2.7" fill="none" stroke="#0b1a14" stroke-width="1.6"/></svg>
  <svg class="a" style="left:642px;top:556.5px" width="17" height="16"><path d="M1 5.5v-2.5a2 2 0 0 1 2-2h2.5M5.5 15h-2.5a2 2 0 0 1 -2-2v-2.5 M15.5 10.5v2.5a2 2 0 0 1 -2 2h-2.5" fill="none" stroke="#e0e0e0" stroke-width="1.1"/><circle cx="12.5" cy="4" r="2.7" fill="none" stroke="#e0e0e0" stroke-width="1.1"/><circle cx="4" cy="12" r="2.7" fill="none" stroke="#e0e0e0" stroke-width="1.1"/></svg>
  <svg class="a" style="left:712px;top:555.5px" width="19" height="19"><circle cx="9.6" cy="9.2" r="8.4" fill="none" stroke="#e8e8e8" stroke-width="1.2"/><circle cx="6.4" cy="9.2" r="1" fill="#e8e8e8"/><circle cx="9.6" cy="9.2" r="1" fill="#e8e8e8"/><circle cx="12.8" cy="9.2" r="1" fill="#e8e8e8"/></svg>
  <svg class="a" style="left:984px;top:555.5px" width="21" height="19"><path d="M8.5 3.5l4.5-2.5h5.5v13.5l-4.5 2.8v-13.8z" fill="none" stroke="#e8185a" stroke-width="1.1" stroke-linejoin="round"/><path d="M13.5 3.5h5" stroke="#e8185a" stroke-width="1"/><circle cx="5.5" cy="4.3" r="1.8" fill="none" stroke="#f2f2f2" stroke-width="1"/><path d="M4 7h3l2.5 3.5-1 0.8-1.5-1.8v2.5l1.8 4.8h-1.5l-1.8-3.8-1.8 3.8h-1.5l1.8-4.8v-2.5l-1.5 1.8-1-0.8z" fill="none" stroke="#f2f2f2" stroke-width="0.9" stroke-linejoin="round"/></svg>
  <div class="t tl" style="left:23.3px">Звук</div>
  <div class="t tl" style="left:82.8px">Видео</div>
  <div class="t tl" style="left:352.9px">Участники</div>
  <div class="t tl" style="left:440.3px">Чат</div>
  <div class="t tl" style="left:485.6px">Отреагировать</div>
  <div class="t tl" style="left:561.9px">Поделиться</div>
  <div class="t tl" style="left:624px">Приложения</div>
  <div class="t tl" style="left:689.3px">Дополнительно</div>
  <div class="t tl" style="left:981px">Выйти</div>
</div>
<div id="dock" class="a"></div>
<div id="dockicons"><svg class="a" style="left:26px;top:608.3px" width="21" height="21" viewBox="0 0 21 21"><defs><clipPath id="fc"><rect width="21" height="21" rx="4.8"/></clipPath></defs><g clip-path="url(#fc)"><rect width="21" height="21" fill="#e8eef4"/><path d="M0 0h11.5q-2.5 6-2.2 11h2.2q-0.5 5 0.3 10h-11.8z" fill="#1e8ef2"/><path d="M5.5 6v2.5M14.5 6v2.5" stroke="#1a3a5a" stroke-width="1"/><path d="M4 14q6.5 3.5 13 0" fill="none" stroke="#1a3a5a" stroke-width="0.9"/></g></svg>
<div class="a" style="left:53.6px;top:608.3px;width:21px;height:21px;border-radius:4.8px;background:radial-gradient(circle at 50% 55%,#ffffff 0%,#5ad0f0 18%,#b04ad8 40%,#3a2a8a 62%,#1a1840 100%);overflow:hidden"></div>
<svg class="a" style="left:80.9px;top:608.3px" width="21" height="21" viewBox="0 0 21 21"><rect width="21" height="21" rx="4.8" fill="#e6e2de"/><rect x="3.5" y="3.5" width="3.8" height="3.8" rx="1" fill="#3ccf4e"/><rect x="8.5" y="3.5" width="3.8" height="3.8" rx="1" fill="#f7b731"/><rect x="13.5" y="3.5" width="3.8" height="3.8" rx="1" fill="#f08a24"/><rect x="3.5" y="8.5" width="3.8" height="3.8" rx="1" fill="#e84040"/><rect x="8.5" y="8.5" width="3.8" height="3.8" rx="1" fill="#a0a0a0"/><rect x="13.5" y="8.5" width="3.8" height="3.8" rx="1" fill="#f06a8a"/><rect x="3.5" y="13.5" width="3.8" height="3.8" rx="1" fill="#9a5ae0"/><rect x="8.5" y="13.5" width="3.8" height="3.8" rx="1" fill="#2aa8f0"/><rect x="13.5" y="13.5" width="3.8" height="3.8" rx="1" fill="#30c8a0"/></svg>
<svg class="a" style="left:107.8px;top:608.3px" width="21" height="21" viewBox="0 0 21 21"><rect width="21" height="21" rx="4.8" fill="#0a0a0a"/><rect x="2.5" y="4" width="8" height="5" fill="#e0e0e0"/><rect x="3" y="11" width="8" height="6" fill="#d0d0d0"/><rect x="12.5" y="7" width="6" height="8" fill="#c8c8c8"/><circle cx="7" cy="10" r="1" fill="#30c030"/><circle cx="7" cy="17.5" r="1" fill="#3080f0"/></svg>
<svg class="a" style="left:135.4px;top:608.3px" width="21" height="21" viewBox="0 0 21 21"><defs><linearGradient id="as" x1="0" y1="0" x2="0" y2="1"><stop offset="0" stop-color="#1ab8f8"/><stop offset="1" stop-color="#1a6ae8"/></linearGradient></defs><rect width="21" height="21" rx="4.8" fill="url(#as)"/><path d="M8.5 4.5l6 10.5M12.5 4.5l-6 10.5M4.5 13h12" stroke="#fff" stroke-width="1.4" stroke-linecap="round"/></svg>
<svg class="a" style="left:162.7px;top:608.3px" width="21" height="21" viewBox="0 0 21 21"><rect width="21" height="21" rx="4.8" fill="#f4f4f4"/><circle cx="10.5" cy="10.5" r="7.8" fill="#e53935"/><path d="M10.5 10.5L17.3 14.4A7.8 7.8 0 0 1 6.6 17.3z" fill="#fbc02d"/><path d="M10.5 10.5L6.6 17.3A7.8 7.8 0 0 1 3.7 6.6z" fill="#43a047"/><circle cx="10.5" cy="10.5" r="3.6" fill="#fff"/><circle cx="10.5" cy="10.5" r="2.8" fill="#1e88e5"/></svg>
<svg class="a" style="left:189.6px;top:608.3px" width="21" height="21" viewBox="0 0 21 21"><defs><linearGradient id="ml" x1="0" y1="0" x2="0" y2="1"><stop offset="0" stop-color="#2ad0fa"/><stop offset="1" stop-color="#1a78ee"/></linearGradient></defs><rect width="21" height="21" rx="4.8" fill="url(#ml)"/><rect x="4" y="6.5" width="13" height="9" rx="1" fill="#fff"/><path d="M4.3 7l6.2 5 6.2-5" fill="none" stroke="#9ab" stroke-width="0.7"/></svg>
<div class="a" style="left:201.5px;top:605.8px;width:11.3px;height:8.7px;border-radius:4.4px;background:#f2403a;color:#fff;font-size:5.5px;line-height:8.7px;text-align:center">210</div>
<svg class="a" style="left:216.4px;top:608.3px" width="21" height="21" viewBox="0 0 21 21"><defs><linearGradient id="ft" x1="0" y1="0" x2="0" y2="1"><stop offset="0" stop-color="#5cf07a"/><stop offset="1" stop-color="#18c040"/></linearGradient></defs><rect width="21" height="21" rx="4.8" fill="url(#ft)"/><rect x="4" y="7" width="9" height="7.5" rx="1.5" fill="#fff"/><path d="M13.5 10l4-3v7z" fill="#fff"/></svg>
<svg class="a" style="left:244.1px;top:608.3px" width="21" height="21" viewBox="0 0 21 21"><rect width="21" height="21" rx="4.8" fill="#b08a5a"/><rect x="0" y="0" width="19" height="21" rx="4.8" fill="#c09868"/><circle cx="9.5" cy="10" r="6" fill="none" stroke="#9a7a50" stroke-width="0.9"/><circle cx="9.5" cy="8.5" r="2" fill="#9a7a50"/><path d="M5.5 14a4.5 3.5 0 0 1 8 0" fill="#9a7a50"/><rect x="19" y="4" width="2" height="3" fill="#e84"/><rect x="19" y="9" width="2" height="3" fill="#4a4"/></svg>
<svg class="a" style="left:271.4px;top:608.3px" width="21" height="21" viewBox="0 0 21 21"><rect width="21" height="21" rx="4.8" fill="#fdfdfd"/><rect x="0" y="0" width="21" height="5.5" fill="#f04040"/><rect x="0" y="0" width="21" height="21" rx="4.8" fill="none"/><text x="10.5" y="4.5" font-size="3.6" fill="#fff" text-anchor="middle" font-family="Liberation Sans">АПР</text><text x="10.5" y="17.2" font-size="11" fill="#222" text-anchor="middle" font-family="Liberation Sans">18</text></svg>
<svg class="a" style="left:298.1px;top:608.3px" width="21" height="21" viewBox="0 0 21 21"><rect width="21" height="21" rx="4.8" fill="#fdfdfd"/><circle cx="5" cy="6" r="1.3" fill="#1e7ef0"/><circle cx="5" cy="10.5" r="1.3" fill="#f04a3a"/><circle cx="5" cy="15" r="1.3" fill="#f59a1a"/><path d="M8 6h9M8 10.5h9M8 15h9" stroke="#ccc" stroke-width="0.7"/></svg>
<svg class="a" style="left:325.2px;top:608.3px" width="21" height="21" viewBox="0 0 21 21"><rect width="21" height="21" rx="4.8" fill="#f6f4ee"/><path d="M0 4.8A4.8 4.8 0 0 1 4.8 0h11.4A4.8 4.8 0 0 1 21 4.8v1.5H0z" fill="#f8d030"/><path d="M3 10h15M3 13.5h15M3 17h15" stroke="#e0ddd4" stroke-width="0.6"/></svg>
<svg class="a" style="left:352.7px;top:608.3px" width="21" height="21" viewBox="0 0 21 21"><rect width="21" height="21" rx="4.8" fill="#e8f0d8"/><path d="M10 0q6 2 11 9v12h-8q0-9-3-21z" fill="#6ad070"/><path d="M5 0v21M13 21q-2-12 8-14" stroke="#fff" stroke-width="1.6" fill="none"/><circle cx="5" cy="13" r="2" fill="#1a8af0" stroke="#fff" stroke-width="0.8"/><rect x="14" y="15" width="5" height="3.5" rx="0.8" fill="#3a8ae0"/></svg>
<svg class="a" style="left:379.8px;top:608.3px" width="21" height="21" viewBox="0 0 21 21"><rect width="21" height="21" rx="4.8" fill="#fbfbfb"/><ellipse cx="10.5" cy="6" rx="2.2" ry="4" fill="#f5a623" opacity="0.85" transform="rotate(0 10.5 10.5)"/><ellipse cx="10.5" cy="6" rx="2.2" ry="4" fill="#f8d030" opacity="0.85" transform="rotate(45 10.5 10.5)"/><ellipse cx="10.5" cy="6" rx="2.2" ry="4" fill="#8ad040" opacity="0.85" transform="rotate(90 10.5 10.5)"/><ellipse cx="10.5" cy="6" rx="2.2" ry="4" fill="#3ac080" opacity="0.85" transform="rotate(135 10.5 10.5)"/><ellipse cx="10.5" cy="6" rx="2.2" ry="4" fill="#3a9af0" opacity="0.85" transform="rotate(180 10.5 10.5)"/><ellipse cx="10.5" cy="6" rx="2.2" ry="4" fill="#8a5ae0" opacity="0.85" transform="rotate(225 10.5 10.5)"/><ellipse cx="10.5" cy="6" rx="2.2" ry="4" fill="#e84aa0" opacity="0.85" transform="rotate(270 10.5 10.5)"/><ellipse cx="10.5" cy="6" rx="2.2" ry="4" fill="#f04a3a" opacity="0.85" transform="rotate(315 10.5 10.5)"/></svg>
<svg class="a" style="left:407px;top:608.3px" width="21" height="21" viewBox="0 0 21 21"><defs><linearGradient id="mu" x1="0" y1="0" x2="0" y2="1"><stop offset="0" stop-color="#fb5c74"/><stop offset="1" stop-color="#fa233b"/></linearGradient></defs><rect width="21" height="21" rx="4.8" fill="url(#mu)"/><path d="M8.5 14.5v-9l7-1.5v9" fill="none" stroke="#fff" stroke-width="1.2"/><ellipse cx="7" cy="14.8" rx="2" ry="1.6" fill="#fff"/><ellipse cx="14" cy="13.3" rx="2" ry="1.6" fill="#fff"/></svg>
<svg class="a" style="left:434.1px;top:608.3px" width="21" height="21" viewBox="0 0 21 21"><defs><linearGradient id="pd" x1="0" y1="0" x2="0" y2="1"><stop offset="0" stop-color="#d070f8"/><stop offset="1" stop-color="#8a3ad8"/></linearGradient></defs><rect width="21" height="21" rx="4.8" fill="url(#pd)"/><circle cx="10.5" cy="9.5" r="6" fill="none" stroke="#fff" stroke-width="1"/><circle cx="10.5" cy="9.5" r="3.5" fill="none" stroke="#fff" stroke-width="0.9"/><circle cx="10.5" cy="9" r="1.5" fill="#fff"/><rect x="9.5" y="11" width="2" height="6" rx="1" fill="#fff"/></svg>
<svg class="a" style="left:461.2px;top:608.3px" width="21" height="21" viewBox="0 0 21 21"><rect width="21" height="21" rx="4.8" fill="#111"/><text x="11.5" y="13" font-size="6.5" fill="#fff" text-anchor="middle" font-family="Liberation Sans" font-weight="bold">tv</text><circle cx="6" cy="10.5" r="1.6" fill="#fff"/></svg>
<svg class="a" style="left:488.8px;top:608.3px" width="21" height="21" viewBox="0 0 21 21"><defs><linearGradient id="bk" x1="0" y1="0" x2="0" y2="1"><stop offset="0" stop-color="#ffa030"/><stop offset="1" stop-color="#f77a10"/></linearGradient></defs><rect width="21" height="21" rx="4.8" fill="url(#bk)"/><path d="M3.5 6q3.5-1.5 6.8 0.5v9q-3.3-2-6.8-0.5zM17.5 6q-3.5-1.5-6.8 0.5v9q3.3-2 6.8-0.5z" fill="#fff"/></svg>
<svg class="a" style="left:516.8px;top:608.3px" width="21" height="21" viewBox="0 0 21 21"><rect width="21" height="21" rx="4.8" fill="#e02a2a"/><rect x="4" y="5" width="9" height="10" rx="1" fill="#fff" transform="rotate(-10 8 10)"/><rect x="7" y="5.5" width="9" height="10" rx="1" fill="#fff" transform="rotate(8 11 10)"/><circle cx="11" cy="9" r="2" fill="#e05a5a"/></svg><div class="a" style="left:527px;top:619.5px;width:11px;height:11px;border-radius:50%;background:radial-gradient(circle at 45% 45%,#6a6a7a 0 25%,#222 55%,#111)"></div>
<svg class="a" style="left:543.7px;top:608.3px" width="21" height="21" viewBox="0 0 21 21"><defs><linearGradient id="ss" x1="0" y1="0" x2="0" y2="1"><stop offset="0" stop-color="#a0a0a0"/><stop offset="1" stop-color="#6a6a6a"/></linearGradient></defs><rect width="21" height="21" rx="4.8" fill="url(#ss)"/><circle cx="10.5" cy="10.5" r="7.5" fill="#3a3a3a"/><circle cx="10.5" cy="10.5" r="5.5" fill="none" stroke="#9a9a9a" stroke-width="1.2"/><circle cx="10.5" cy="10.5" r="1.8" fill="#aaa"/><path d="M10.5 5v11M5.7 8l9.6 5M5.7 13l9.6-5" stroke="#9a9a9a" stroke-width="0.8"/></svg>
<div class="a" style="left:557.5px;top:606px;width:8.8px;height:8.8px;border-radius:50%;background:#f2403a;color:#fff;font-size:5.5px;line-height:8.8px;text-align:center">1</div>
<svg class="a" style="left:571px;top:608.3px" width="21" height="21" viewBox="0 0 21 21"><circle cx="10.5" cy="10.5" r="10.2" fill="#f2f2f2"/><path d="M4 7h13v6h-13z" fill="#2a9ae0"/><path d="M7 11h7v5q-3.5 2-7 0z" fill="#fff" stroke="#6ab8e8" stroke-width="0.6"/><path d="M3.5 13.5h14" stroke="#bbb" stroke-width="0.6"/></svg>
<svg class="a" style="left:598.2px;top:608.3px" width="21" height="21" viewBox="0 0 21 21"><path d="M10.5 1.2c5.5 0 9.2 2.5 9.2 8.3 0 5.5-3.5 8.2-8.8 8.2l-3.5 2.8v-3.2c-3.8-1.2-6.2-3.8-6.2-7.8 0-5.8 3.8-8.3 9.3-8.3z" fill="#9a72e8" stroke="#fff" stroke-width="0.8"/><path d="M7 6.5c0.6 2.8 2.5 5 5.2 6l1.4-1.3-1.8-1.4-0.8 0.6c-1-0.5-1.7-1.3-2.2-2.3l0.6-0.8-1.4-1.8z" fill="#fff"/></svg>
<div class="a" style="left:613.5px;top:605.6px;width:10px;height:9px;border-radius:4.5px;background:#f2403a;color:#fff;font-size:5.5px;line-height:9px;text-align:center">18</div>
<div class="a" style="left:628px;top:607px;width:0.9px;height:24px;background:#8a7868"></div>
<svg class="a" style="left:636.9px;top:608.3px" width="21" height="21" viewBox="0 0 21 21"><defs><linearGradient id="wa" x1="0" y1="0" x2="0" y2="1"><stop offset="0" stop-color="#5ef27a"/><stop offset="1" stop-color="#22c53c"/></linearGradient></defs><rect width="21" height="21" rx="4.8" fill="url(#wa)"/><circle cx="10.5" cy="10.2" r="6.3" fill="none" stroke="#fff" stroke-width="1.3"/><path d="M4.5 17l1.2-3.5 2.5 2.3z" fill="#fff"/><path d="M8 8c0.3 2 1.8 3.8 4 4.6l0.9-0.9-1.3-1-0.6 0.4c-0.7-0.4-1.2-0.9-1.6-1.6l0.4-0.6-1-1.3z" fill="#fff"/></svg>
<svg class="a" style="left:664.7px;top:608.3px" width="21" height="21" viewBox="0 0 21 21"><rect width="21" height="21" rx="4.8" fill="#ef443b"/><path d="M8.5 6.5l4 4-4 4-4-4z" fill="#fff"/><path d="M13 6.5l4 4-4 4" fill="none" stroke="#fff" stroke-width="1.4"/></svg>
<svg class="a" style="left:691.8px;top:608.3px" width="21" height="21" viewBox="0 0 21 21"><rect width="21" height="21" rx="4.8" fill="#f4f4f4"/><circle cx="10.5" cy="10.5" r="7.8" fill="#1e90f0"/><path d="M14.5 6.5l-5 3-3 5 5-3z" fill="#fff"/><path d="M14.5 6.5l-3 5-2-2z" fill="#f03a3a"/></svg>
<svg class="a" style="left:718.8px;top:608.3px" width="21" height="21" viewBox="0 0 21 21"><rect width="21" height="21" rx="4.8" fill="#0b5cff"/><text x="10.5" y="12" font-size="4.6" fill="#fff" text-anchor="middle" font-family="Liberation Sans">zoom</text></svg>
<svg class="a" style="left:746px;top:608.3px" width="21" height="21" viewBox="0 0 21 21"><rect x="8" y="3" width="13" height="15" fill="#fff"/><path d="M10 6h9M10 8.5h9M10 11h9M10 13.5h9M10 16h9" stroke="#888" stroke-width="0.6"/><path d="M0.5 3l10-2v19l-10-2z" fill="#2b5cb8"/><text x="5.5" y="13.2" font-size="7" fill="#fff" text-anchor="middle" font-family="Liberation Sans" font-weight="bold">W</text></svg>
<svg class="a" style="left:773.5px;top:608.3px" width="21" height="21" viewBox="0 0 21 21"><rect width="21" height="21" rx="4.8" fill="#f2f2f2"/><circle cx="10.5" cy="10.5" r="8.2" fill="#2aa3df"/><path d="M5 10.3l10-4-1.8 9-3-2.3-1.6 1.5 0.3-2.6 4-3.6-5 3z" fill="#fff"/></svg>
<svg class="a" style="left:800.7px;top:608.3px" width="21" height="21" viewBox="0 0 21 21"><rect width="21" height="21" rx="4.8" fill="#b31b1b"/><path d="M5 16q2-5 5.5-11q1.5 4 5.5 8q-6-1-11 3z" fill="none" stroke="#fff" stroke-width="1"/></svg>
<svg class="a" style="left:827.8px;top:608.3px" width="21" height="21" viewBox="0 0 21 21"><rect x="8" y="3" width="13" height="15" fill="#fff"/><path d="M10 6h9M10 8.5h9M10 11h9M10 13.5h9M10 16h9M14 4v13" stroke="#3a9a5a" stroke-width="0.6"/><path d="M0.5 3l10-2v19l-10-2z" fill="#1f7a44"/><text x="5.5" y="13.2" font-size="7" fill="#fff" text-anchor="middle" font-family="Liberation Sans" font-weight="bold">X</text></svg>
<svg class="a" style="left:855.2px;top:608.3px" width="21" height="21" viewBox="0 0 21 21"><rect width="21" height="21" rx="4.5" fill="#cfcfcf"/><rect x="1" y="1" width="19" height="19" rx="4" fill="#0e1a18"/><path d="M2.5 12h4l1-3 1.5 6 1.5-9 1.5 6h6" fill="none" stroke="#3ad07a" stroke-width="0.6"/></svg>
<svg class="a" style="left:882.1px;top:608.3px" width="21" height="21" viewBox="0 0 21 21"><path d="M10.5 0.8l9 4.5v10.5l-9 4.5-9-4.5v-10.5z" fill="#f5c04a" stroke="#b07a30" stroke-width="0.6"/><path d="M1.5 5.3l9 4.5 9-4.5M10.5 9.8v10" stroke="#e0a030" stroke-width="0.5" fill="none"/><circle cx="7.5" cy="15" r="1.8" fill="none" stroke="#222" stroke-width="0.9"/><circle cx="13.5" cy="15" r="1.8" fill="none" stroke="#222" stroke-width="0.9"/><path d="M8.5 13.5l4-7M12.5 13.5l-4-7" stroke="#222" stroke-width="0.9"/></svg>
<svg class="a" style="left:909.3px;top:608.3px" width="21" height="21" viewBox="0 0 21 21"><rect x="8" y="3" width="13" height="15" fill="#fff"/><circle cx="15" cy="8.5" r="3" fill="#d04a2a"/><path d="M15 8.5v-3a3 3 0 0 1 3 3z" fill="#333"/><path d="M11 13.5h8M11 15.5h8" stroke="#d04a2a" stroke-width="0.7"/><path d="M0.5 3l10-2v19l-10-2z" fill="#d24726"/><text x="5.5" y="13.2" font-size="7" fill="#fff" text-anchor="middle" font-family="Liberation Sans" font-weight="bold">P</text></svg>
<div class="a" style="left:940.2px;top:607px;width:0.9px;height:24px;background:#8a7868"></div>
<svg class="a" style="left:946.8px;top:608.3px" width="26" height="23" viewBox="0 0 21 21"><rect x="0.5" y="5" width="20" height="13" fill="#f6f6f6" stroke="#ddd" stroke-width="0.4"/><rect x="2" y="6.5" width="17" height="1.5" fill="#c8d8f0"/><rect x="6" y="10" width="8" height="1.5" fill="#8ab0e0"/><circle cx="17" cy="17" r="3" fill="#2a8af0" stroke="#fff" stroke-width="0.7"/></svg>
<svg class="a" style="left:977.3px;top:608.3px" width="21" height="21" viewBox="0 0 21 21"><ellipse cx="10.5" cy="3.5" rx="8" ry="2" fill="#e8e8ea"/><path d="M2.5 3.5l1.5 16q6.5 2 13 0l1.5-16q-8 3-16 0z" fill="#dcdde0"/><path d="M6 6v13M10.5 6.5v13.5M15 6v13" stroke="#c8c8cc" stroke-width="0.6"/></svg>
<div class="a" style="left:35.4px;top:632.3px;width:2.2px;height:2.2px;border-radius:50%;background:#2a2420"></div>
<div class="a" style="left:171.6px;top:632.3px;width:2.2px;height:2.2px;border-radius:50%;background:#2a2420"></div>
<div class="a" style="left:198.5px;top:632.3px;width:2.2px;height:2.2px;border-radius:50%;background:#2a2420"></div>
<div class="a" style="left:416.59999999999997px;top:632.3px;width:2.2px;height:2.2px;border-radius:50%;background:#2a2420"></div>
<div class="a" style="left:607.4px;top:632.3px;width:2.2px;height:2.2px;border-radius:50%;background:#2a2420"></div>
<div class="a" style="left:645.9px;top:632.3px;width:2.2px;height:2.2px;border-radius:50%;background:#2a2420"></div>
<div class="a" style="left:673.9px;top:632.3px;width:2.2px;height:2.2px;border-radius:50%;background:#2a2420"></div>
<div class="a" style="left:701.1px;top:632.3px;width:2.2px;height:2.2px;border-radius:50%;background:#2a2420"></div>
<div class="a" style="left:727.9px;top:632.3px;width:2.2px;height:2.2px;border-radius:50%;background:#2a2420"></div>
<div class="a" style="left:755.6999999999999px;top:632.3px;width:2.2px;height:2.2px;border-radius:50%;background:#2a2420"></div>
<div class="a" style="left:783.1999999999999px;top:632.3px;width:2.2px;height:2.2px;border-radius:50%;background:#2a2420"></div>
<div class="a" style="left:810.4px;top:632.3px;width:2.2px;height:2.2px;border-radius:50%;background:#2a2420"></div>
<div class="a" style="left:837.9px;top:632.3px;width:2.2px;height:2.2px;border-radius:50%;background:#2a2420"></div>
<div class="a" style="left:864.9px;top:632.3px;width:2.2px;height:2.2px;border-radius:50%;background:#2a2420"></div>
<div class="a" style="left:891.9px;top:632.3px;width:2.2px;height:2.2px;border-radius:50%;background:#2a2420"></div>
<div class="a" style="left:919.9px;top:632.3px;width:2.2px;height:2.2px;border-radius:50%;background:#2a2420"></div></div>
</body></html>
